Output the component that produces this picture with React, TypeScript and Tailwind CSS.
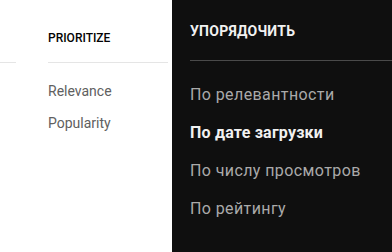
export default function App() {
  const options = [
    { label: "По релевантности", active: false },
    { label: "По дате загрузки", active: true },
    { label: "По числу просмотров", active: false },
    { label: "По рейтингу", active: false },
  ];

  return (
    <div className="flex w-[392px] h-[252px] overflow-hidden font-['Roboto',sans-serif]">
      {/* светлая колонка */}
      <div className="flex w-[172px] shrink-0 bg-white">
        <div className="w-4 shrink-0">
          <div className="h-[63px] border-b border-[#e5e5e5]" />
        </div>
        <div className="ml-8 w-[120px] shrink-0">
          <div className="h-[63px] pt-[30px] border-b border-[#e5e5e5]">
            <h4 className="text-[12px] leading-4 font-medium text-[#030303]">PRIORITIZE</h4>
          </div>
          <div className="pt-3">
            <div className="text-[14px] leading-8 text-[#606060]">Relevance</div>
            <div className="text-[14px] leading-8 text-[#606060]">Popularity</div>
          </div>
        </div>
      </div>

      {/* тёмное меню */}
      <div className="flex-1 bg-[#0f0f0f]">
        <div className="ml-[18px] h-[61px] pt-[21px] border-b border-[#4a4a4a]">
          <h4 className="text-[14px] leading-5 font-bold tracking-[0.25px] text-[#f1f1f1]">УПОРЯДОЧИТЬ</h4>
        </div>
        <div className="pl-[18px] pt-[15px]">
          {options.map((o) => (
            <div
              key={o.label}
              className={
                o.active
                  ? "text-[16px] leading-[38px] font-bold tracking-[0.2px] text-[#f1f1f1]"
                  : "text-[16px] leading-[38px] tracking-[0.4px] text-[#aaaaaa]"
              }
            >
              {o.label}
            </div>
          ))}
        </div>
      </div>
    </div>
  );
}
